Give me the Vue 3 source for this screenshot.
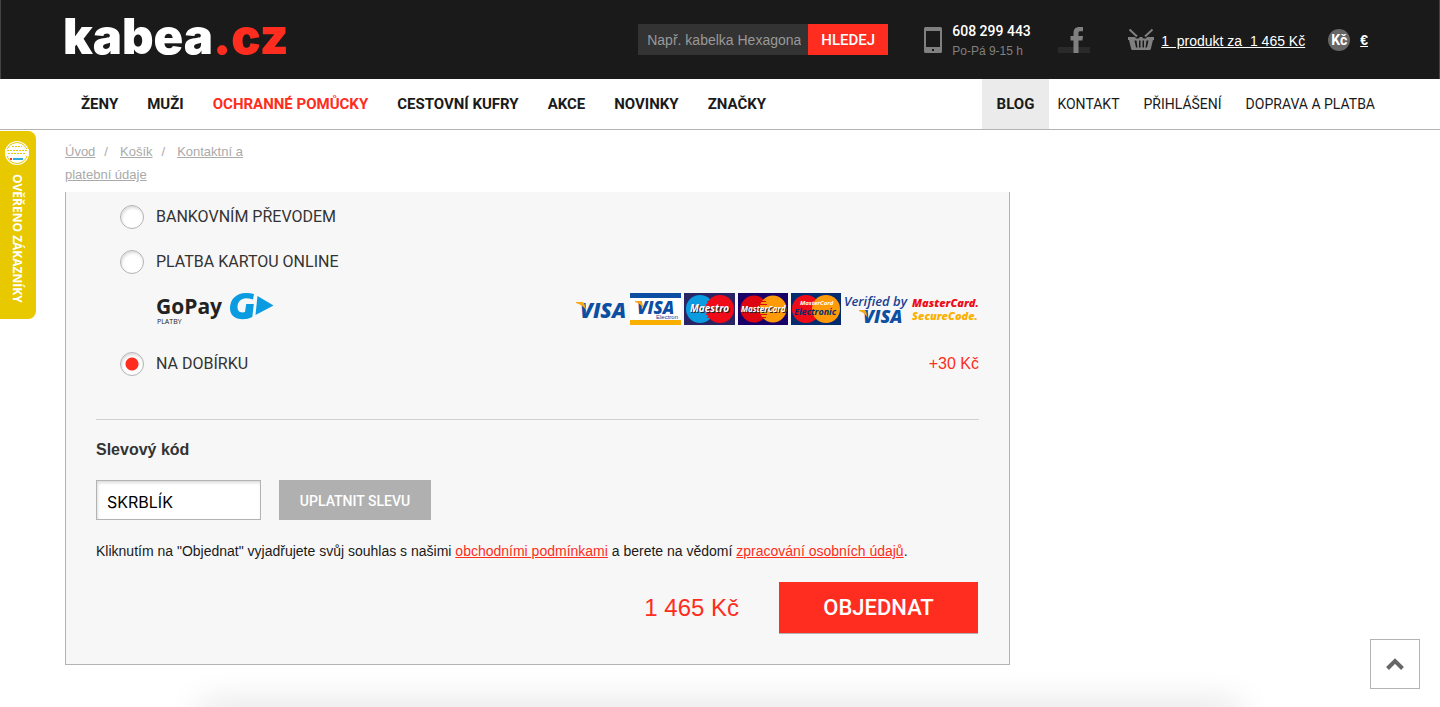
<script setup>
import { ref } from 'vue'

const query = ref('')
const payment = ref('cod')
const coupon = ref('SKRBLÍK')
const categories = [
  { name: 'ŽENY' },
  { name: 'MUŽI' },
  { name: 'OCHRANNÉ POMŮCKY', hot: true },
  { name: 'CESTOVNÍ KUFRY' },
  { name: 'AKCE' },
  { name: 'NOVINKY' },
  { name: 'ZNAČKY' }
]
const pages = ['KONTAKT', 'PŘIHLÁŠENÍ', 'DOPRAVA A PLATBA']
</script>

<template>
  <div class="page">
    <header class="top">
      <a class="logo" href="#">kabea<span>.cz</span></a>
      <form class="search" @submit.prevent>
        <input v-model="query" type="text" aria-label="Hledat" placeholder="Např. kabelka Hexagona" />
        <button type="submit">HLEDEJ</button>
      </form>
      <div class="phone">
        <svg width="18" height="26" viewBox="0 0 18 26" aria-hidden="true">
          <path fill="#808080" fill-rule="evenodd" d="M1.500 0h15a1.500 1.500 0 0 1 1.500 1.500v23a1.500 1.500 0 0 1-1.500 1.500h-15A1.500 1.500 0 0 1 0 24.500v-23A1.500 1.500 0 0 1 1.500 0zM2 4v16h14V4zM8 22v2h2v-2z" />
        </svg>
        <div>
          <strong>608 299 443</strong>
          <small>Po-Pá 9-15 h</small>
        </div>
      </div>
      <a class="facebook" href="#" aria-label="Facebook">
        <svg width="32" height="26" viewBox="0 0 32 26" aria-hidden="true">
          <path fill="#2a2a2a" d="M0 20h32v6H0z" />
          <path fill="#808080" d="M15.500 26V13.500H12.500V9h3V6c0-4 2-6 6-6H25v4.200h-2.300c-1.700 0-2.200.6-2.200 2V9H25l-.6 4.500h-3.900V26z" />
        </svg>
      </a>
      <a class="basket" href="#">
        <svg width="26" height="23" viewBox="0 0 26 23" aria-hidden="true">
          <path fill="none" stroke="#808080" stroke-width="2" d="M1.500 1.500 9 8.500M24.500 1.500 17 8.500" />
          <path fill="#808080" fill-rule="evenodd" d="M0 9h7l1 1.500h2.500L12 9h2l1.500 1.500H18L19 9h7v3h-1l-2.200 9q-.3 1-1.300 1h-17q-1 0-1.300-1L1 12H0zM6.500 12.500l1.500 7h1.500l-1-7zM11 12.500v7h1.500v-7zM14.500 12.500v7H16v-7zM18.500 12.500l-1 7H19l1.500-7z" />
        </svg>
        <span>1 &nbsp;produkt za &nbsp;1 465 Kč</span>
      </a>
      <div class="currency">
        <button type="button">Kč</button>
        <a href="#">€</a>
      </div>
    </header>

    <nav class="menu">
      <ul class="categories">
        <li v-for="c in categories" :key="c.name"><a href="#" :class="{ hot: c.hot }">{{ c.name }}</a></li>
      </ul>
      <ul class="pages">
        <li class="blog"><a href="#">BLOG</a></li>
        <li v-for="p in pages" :key="p"><a href="#">{{ p }}</a></li>
      </ul>
    </nav>

    <main class="content">
      <div class="crumbs">
        <a href="#">Úvod</a><i>/</i><a href="#">Košík</a><i>/</i><a href="#">Kontaktní a platební údaje</a>
      </div>

      <form class="order" @submit.prevent>
        <div class="methods">
          <label class="method"><input v-model="payment" type="radio" name="payment" value="bank" />BANKOVNÍM PŘEVODEM</label>
          <label class="method"><input v-model="payment" type="radio" name="payment" value="card" />PLATBA KARTOU ONLINE</label>
          <div class="brands">
            <svg width="118" height="34" viewBox="0 0 118 34" role="img" aria-label="GoPay platby">
              <text x="0" y="22" class="gopay">GoPay</text>
              <text x="1" y="32" class="platby">PLATBY</text>
              <path fill="#0a9be0" d="M98 2l-1 5.500q-4-1.300-7-1.300c-5 0-8.500 3.600-8.500 8.800 0 3.700 1.800 5.400 4.900 5.400q1.400 0 2.600-.3l1.200-8h7.600L96.300 25q-4.300 2.200-9.300 2.200C78.500 27.200 74 23 74 16.200 74 7 80.500 1 90 1q4.500 0 8 1z" />
              <path fill="#0a9be0" d="M101.500 4 117.500 13.500 99.500 23z" />
            </svg>
            <svg width="404" height="34" viewBox="0 0 404 34" role="img" aria-label="Platební karty">
              <text x="5" y="26" class="visa" font-size="21">VISA</text>
              <path fill="#f7a81b" d="M1 10h6q2 0 2.500 2l1.500 6q-3-5-10-7z" />
              <path fill="#fff" d="M55 1h51v32H55z" />
              <path fill="#0b4ea2" d="M55 1h51v5H55z" />
              <path fill="#fbb000" d="M55 28h51v5H55z" />
              <text x="62" y="22" class="visa" font-size="17">VISA</text>
              <path fill="#f7a81b" d="M60 9h5q2 0 2.300 2l1 5q-3-4.500-8.300-6z" />
              <text x="81" y="27" fill="#34317c" font-size="6" class="plain">Electron</text>

              <path fill="#292565" d="M109 1h51v32h-51z" />
              <circle cx="125" cy="17" r="14" fill="#0a9be0" /><circle cx="145" cy="17" r="14" fill="#f00b18" />
              <path stroke="#f00b18" d="M132 9.500h5M131 12.500h7M131 22.500h7M132 25.500h5" />
              <text x="115" y="20" fill="#fff" font-size="10" class="brand shade">Maestro</text>

              <path fill="#190069" d="M163 1h50v32h-50z" />
              <circle cx="179" cy="17" r="13.500" fill="#dd0510" /><circle cx="198" cy="17" r="13.500" fill="#ff9b09" />
              <path stroke="#dd0510" d="M186 9.500h5M185 12.500h7M185 22.500h7M186 25.500h5" />
              <text x="166" y="20" fill="#fff" font-size="8" class="brand shade">MasterCard</text>

              <path fill="#032b70" d="M216 1h50v32h-50z" />
              <circle cx="231" cy="17" r="14" fill="#f00b18" /><circle cx="251" cy="17" r="14" fill="#ff9b09" />
              <text x="225" y="13" fill="#fff" font-size="6" class="brand">MasterCard</text>
              <text x="219" y="23" fill="#032b70" font-size="9" class="brand">Electronic</text>

              <text x="269" y="14" fill="#1b3f91" font-size="13" class="verified">Verified by</text>
              <text x="288" y="31" class="visa" font-size="18">VISA</text>
              <path fill="#f7a81b" d="M284 18h5q2 0 2.300 2l1 5q-3-4.500-8.300-6z" />
              <text x="337" y="15" fill="#f00b18" font-size="11" class="brand heavy">MasterCard.</text>
              <text x="337" y="28" fill="#fbb000" font-size="11" class="brand heavy">SecureCode.</text>
            </svg>
          </div>
          <div class="row">
            <label class="method"><input v-model="payment" type="radio" name="payment" value="cod" />NA DOBÍRKU</label>
            <span class="fee">+30 Kč</span>
          </div>
        </div>

        <label class="coupon-title" for="coupon">Slevový kód</label>
        <div class="coupon">
          <input id="coupon" v-model="coupon" type="text" />
          <button type="button">UPLATNIT SLEVU</button>
        </div>
        <p class="terms">
          Kliknutím na "Objednat" vyjadřujete svůj souhlas s našimi <a href="#">obchodními podmínkami</a> a berete na vědomí
          <a href="#">zpracování osobních údajů</a>.
        </p>
        <div class="summary">
          <span>1 465 Kč</span>
          <button type="submit">OBJEDNAT</button>
        </div>
      </form>
    </main>

    <a class="verified-shop" href="#">
      <svg width="24" height="24" viewBox="0 0 24 24" aria-hidden="true">
        <circle cx="12" cy="12" r="12" fill="#fff" />
        <circle cx="12" cy="12" r="10.500" fill="none" stroke="#e8c900" />
        <path fill="#fff" d="M0 8h24v7H0z" />
        <path stroke="#e8c900" stroke-dasharray="2 1" d="M2 9.500h20M3 12.500h18M7 5.500h10" />
        <path stroke="#31a8df" stroke-width="2" d="M8 18h10" /><path fill="#e63b2e" d="M5 17h2v2H5z" />
      </svg>
      <span>OVĚŘENO ZÁKAZNÍKY</span>
    </a>
    <div class="glow"></div>
    <button class="to-top" type="button" aria-label="Nahoru">
      <svg width="18" height="12" viewBox="0 0 18 12" aria-hidden="true">
        <path fill="none" stroke="#666" stroke-width="4" d="M1.500 10.500 9 3l7.500 7.500" />
      </svg>
    </button>
  </div>
</template>

<style>
body {
  background: #fff;
}
</style>

<style scoped>
.page {
  position: relative;
  min-height: 100vh;
  overflow: hidden;
  color: #1a1a1a;
  font: 14px/20px "Liberation Sans", Arial, sans-serif;
}
.page * {
  box-sizing: border-box;
}
a {
  color: inherit;
}
button,
input {
  margin: 0;
  border: 0;
  border-radius: 0;
  padding: 0;
  font: inherit;
}
button {
  cursor: pointer;
}
ul {
  display: flex;
  margin: 0;
  padding: 0;
  list-style: none;
}
.top {
  display: flex;
  align-items: center;
  height: 79px;
  padding: 0 71px 0 62px;
  border: solid #444;
  border-width: 0 1px;
  background: #1a1a1a;
  color: #fff;
}
.logo {
  margin-right: auto;
  padding-bottom: 6px;
  font: 900 49px/64px Inter, sans-serif;
  text-decoration: none;
}
.logo span {
  color: #ff2d20;
}
.search {
  display: flex;
  margin-right: 36px;
}
.search input {
  width: 170px;
  height: 31px;
  padding: 0 7px 0 9px;
  background: #333;
  color: #fff;
}
.search input::placeholder {
  color: #999;
  opacity: 1;
}
.search button {
  width: 80px;
  background: #ff2d20;
  color: #fff;
  font-family: Roboto, sans-serif;
  font-size: 15px;
  font-weight: 500;
}
.phone {
  display: flex;
  align-items: center;
  gap: 10px;
  width: 134px;
}
.phone div {
  padding-top: 2px;
}
.phone strong,
.phone small {
  display: block;
  white-space: nowrap;
}
.phone strong {
  font-family: Roboto, sans-serif;
  font-weight: 500;
}
.phone small {
  color: #808080;
  font-size: 12px;
}
.facebook {
  margin-right: 38px;
}
.facebook svg {
  display: block;
}
.basket {
  display: flex;
  align-items: center;
  gap: 7px;
  margin-right: 23px;
  white-space: nowrap;
}
.basket span {
  padding-top: 2px;
}
.currency {
  display: flex;
  align-items: center;
  gap: 10px;
  font-weight: 700;
}
.currency button {
  width: 22px;
  height: 22px;
  border-radius: 50%;
  background: #666;
  color: #fff;
  font-family: Roboto, sans-serif;
  white-space: nowrap;
}
.menu {
  display: flex;
  justify-content: space-between;
  height: 51px;
  padding: 0 65px;
  border-bottom: 1px solid #b3b3b3;
  font-family: Roboto, sans-serif;
  line-height: 50px;
}
.menu a {
  text-decoration: none;
  white-space: nowrap;
}
.categories {
  gap: 29px;
  padding-left: 16px;
  font-size: 15px;
  font-weight: 700;
}
.categories .hot {
  color: #ff2d20;
}
.pages {
  gap: 24px;
}
.pages .blog {
  margin-right: -16px;
  padding: 0 15px;
  background: #ebebeb;
  font-size: 15px;
  font-weight: 700;
}
.content {
  padding: 10px 65px 42px;
}
.crumbs {
  width: 200px;
  margin-bottom: 6px;
  color: #aaa;
  font-size: 13px;
  line-height: 23px;
}
.crumbs i {
  margin: 0 12px 0 9px;
  font-style: normal;
}
.order {
  width: 72.140%;
  padding: 2px 30px 30px;
  border: 1px solid #b3b3b3;
  border-top: 0;
  background: #f7f7f7;
}
.methods {
  padding: 0 0 33px 24px;
  border-bottom: 1px solid #d0d0d0;
  color: #333;
  font-size: 16px;
}
.method {
  display: flex;
  align-items: center;
  gap: 12px;
  height: 45px;
  font-family: Roboto, sans-serif;
}
.method input {
  appearance: none;
  width: 24px;
  height: 24px;
  border: 1px solid #b3b3b3;
  border-radius: 50%;
  background: #fff;
  box-shadow: inset 1px 2px 3px #ddd;
}
.method input:checked {
  background: radial-gradient(circle, #ff2d20 6px, #fff 7px);
}
.brands {
  display: flex;
  justify-content: space-between;
  height: 57px;
  padding: 8px 0 0 36px;
}
.row {
  display: flex;
  align-items: center;
  justify-content: space-between;
}
.fee {
  color: #ff2d20;
}
.gopay {
  fill: #222;
  font: 700 21px "Open Sans", sans-serif;
}
.platby {
  fill: #222;
  font: 7px "Open Sans", sans-serif;
}
.visa {
  fill: #0b4ea2;
  font-family: "Open Sans", sans-serif;
  font-weight: 800;
  font-style: italic;
}
.plain {
  font-family: "Liberation Sans", sans-serif;
}
.brand {
  font-family: "Open Sans", sans-serif;
  font-weight: 700;
  font-style: italic;
}
.heavy {
  font-weight: 800;
}
.shade {
  text-shadow: 1px 1px #222;
}
.verified {
  font-family: "Open Sans", sans-serif;
  font-weight: 600;
  font-style: italic;
}
.coupon-title {
  display: block;
  margin: 20px 0;
  color: #333;
  font-size: 16px;
  font-weight: 700;
}
.coupon {
  display: flex;
  gap: 18px;
  height: 40px;
}
.coupon input {
  width: 165px;
  padding: 4px 10px 0;
  border: 1px solid #b3b3b3;
  background: #fff;
  box-shadow: inset 1px 2px 3px #ddd;
  color: #000;
  font-family: Inter, sans-serif;
  font-size: 16px;
}
.coupon button {
  width: 152px;
  padding-top: 2px;
  background: #b0b0b0;
  color: #fff;
  font-family: Roboto, sans-serif;
  font-weight: 500;
}
.terms {
  margin: 21px 0;
}
.terms a {
  color: #ff2d20;
}
.summary {
  display: flex;
  align-items: center;
  justify-content: flex-end;
  gap: 40px;
  padding-right: 1px;
  color: #ff2d20;
  font-size: 24px;
}
.summary button {
  width: 199px;
  height: 52px;
  border-bottom: 1px solid #b3b3b3;
  background: #ff2d20;
  color: #fff;
  font-family: Roboto, sans-serif;
  font-size: 22px;
  font-weight: 500;
}
.verified-shop {
  position: fixed;
  top: 131px;
  left: 0;
  display: flex;
  flex-direction: column;
  align-items: center;
  gap: 9px;
  width: 36px;
  height: 188px;
  padding: 10px 2px 0 0;
  border-radius: 0 8px 8px 0;
  background: #e8c900;
  color: #fff;
  font: 700 12px/16px "Open Sans", sans-serif;
  text-decoration: none;
}
.verified-shop span {
  writing-mode: vertical-rl;
  white-space: nowrap;
}
.glow {
  position: fixed;
  right: 200px;
  bottom: -20px;
  left: 200px;
  height: 20px;
  box-shadow: 0 0 36px #d6d6d6;
}
.to-top {
  position: fixed;
  right: 20px;
  bottom: 18px;
  display: grid;
  place-items: center;
  width: 50px;
  height: 50px;
  border: 1px solid #b3b3b3;
  background: #fff;
}
</style>
